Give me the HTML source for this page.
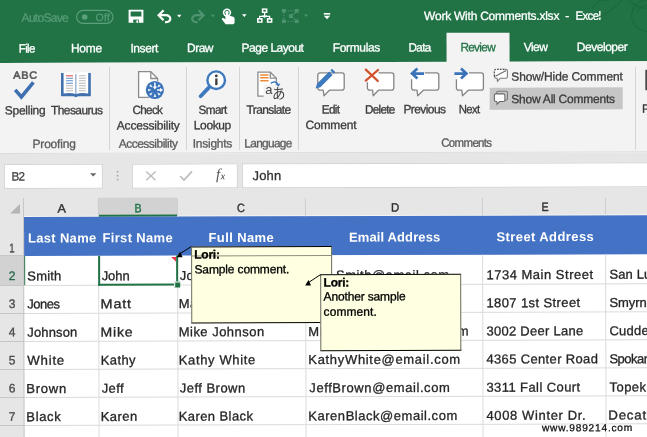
<!DOCTYPE html>
<html><head><meta charset="utf-8">
<style>
*{margin:0;padding:0;box-sizing:border-box}
html,body{width:647px;height:437px;overflow:hidden;background:#fff}
body{font-family:"Liberation Sans",sans-serif;position:relative;color:#262626}
.a{position:absolute;white-space:nowrap;line-height:1}
.b{position:absolute}
svg{position:absolute;overflow:visible}
</style></head><body>
<div id="root" style="position:absolute;left:-8px;top:-8px;width:663px;height:453px;overflow:hidden;filter:blur(0.3px)"><div style="position:absolute;left:8px;top:8px;width:647px;height:437px">
<div id="r" style="position:absolute;left:0;top:0;width:647px;height:437px;transform-origin:0 218px;transform:rotate(-0.153deg)">
<!-- title + tabs -->
<div class="b" style="left:-6px;top:-6px;width:660px;height:69.400px;background:#217346"></div>
<div class="b" style="left:447px;top:34.400px;width:63px;height:30px;background:#f3f3f3"></div>
<!-- ribbon -->
<div class="b" style="left:-6px;top:63.400px;width:660px;height:89.400px;background:#f3f3f3"></div>
<div class="b" style="left:-6px;top:152.600px;width:660px;height:1px;background:#dadada"></div>
<div class="b" style="left:490px;top:89.100px;width:132.700px;height:21.600px;background:#c6c6c6"></div>
<!-- formula bar -->
<div class="b" style="left:-6px;top:153.600px;width:660px;height:45px;background:#e6e6e6"></div>
<div class="b" style="left:3.600px;top:163.700px;width:99.600px;height:25.100px;background:#fff;border:1px solid #d4d4d4"></div>
<div class="b" style="left:132.300px;top:163.700px;width:106.200px;height:25.100px;background:#fff;border:1px solid #d4d4d4"></div>
<div class="b" style="left:241.800px;top:163.700px;width:420px;height:25.100px;background:#fff;border:1px solid #d4d4d4"></div>
<!-- column headers -->
<div class="b" style="left:-6px;top:197.500px;width:660px;height:19.700px;background:#e6e6e6"></div>
<div class="b" style="left:97.900px;top:198.200px;width:79.100px;height:19px;background:#d2d2d2;border-bottom:2px solid #217346"></div>
<div class="b" style="left:24.200px;top:216.200px;width:73.700px;height:1px;background:#f4f4f4"></div><div class="b" style="left:177px;top:216.200px;width:490px;height:1px;background:#f4f4f4"></div>
<!-- sheet white -->
<div class="b" style="left:24px;top:255px;width:640px;height:200px;background:#fff"></div>
<!-- row header col -->
<div class="b" style="left:-6px;top:217.200px;width:30.200px;height:240px;background:#e6e6e6"></div>
<div class="b" style="left:-6px;top:255.800px;width:31px;height:29.800px;background:#d2d2d2;border-right:1.600px solid #217346"></div>
<!-- blue header row -->
<div class="b" style="left:24.200px;top:217.200px;width:640px;height:39px;background:#4472c4"></div>
<!-- grid lines -->
<div class="b" style="left:24.200px;top:284.600px;width:640px;height:1px;background:#dbdbdb"></div>
<div class="b" style="left:24.200px;top:312.650px;width:640px;height:1px;background:#dbdbdb"></div>
<div class="b" style="left:24.200px;top:340.700px;width:640px;height:1px;background:#dbdbdb"></div>
<div class="b" style="left:24.200px;top:368.700px;width:640px;height:1px;background:#dbdbdb"></div>
<div class="b" style="left:24.200px;top:396.700px;width:640px;height:1px;background:#dbdbdb"></div>
<div class="b" style="left:24.200px;top:424.700px;width:640px;height:1px;background:#dbdbdb"></div>
<div class="b" style="left:97.700px;top:255.800px;width:1px;height:200px;background:#dbdbdb"></div>
<div class="b" style="left:176.600px;top:255.800px;width:1px;height:200px;background:#dbdbdb"></div>
<div class="b" style="left:304.800px;top:255.800px;width:1px;height:200px;background:#dbdbdb"></div>
<div class="b" style="left:482.300px;top:255.800px;width:1px;height:200px;background:#dbdbdb"></div>
<div class="b" style="left:605.400px;top:255.800px;width:1px;height:200px;background:#dbdbdb"></div>
<!-- header separators -->
<div class="b" style="left:97.700px;top:199px;width:1px;height:18px;background:#cfcfcf"></div>
<div class="b" style="left:176.600px;top:199px;width:1px;height:18px;background:#cfcfcf"></div>
<div class="b" style="left:304.800px;top:199px;width:1px;height:18px;background:#cfcfcf"></div>
<div class="b" style="left:482.300px;top:199px;width:1px;height:18px;background:#cfcfcf"></div>
<div class="b" style="left:605.400px;top:199px;width:1px;height:18px;background:#cfcfcf"></div>
<!-- row header lines -->
<div class="b" style="left:-6px;top:254.800px;width:30px;height:1px;background:#c6c6c6"></div>
<div class="b" style="left:-6px;top:284.600px;width:30px;height:1px;background:#c6c6c6"></div>
<div class="b" style="left:-6px;top:312.650px;width:30px;height:1px;background:#c6c6c6"></div>
<div class="b" style="left:-6px;top:340.700px;width:30px;height:1px;background:#c6c6c6"></div>
<div class="b" style="left:-6px;top:368.700px;width:30px;height:1px;background:#c6c6c6"></div>
<div class="b" style="left:-6px;top:396.700px;width:30px;height:1px;background:#c6c6c6"></div>
<div class="b" style="left:-6px;top:424.700px;width:30px;height:1px;background:#c6c6c6"></div>
<div class="b" style="left:23.400px;top:197.500px;width:1px;height:260px;background:#c6c6c6"></div>
<!-- selected cell -->
<div class="b" style="left:97.500px;top:255.800px;width:80.700px;height:30.400px;border:2px solid #217346;border-top:none"></div>
<div class="b" style="left:173.700px;top:281.500px;width:6.600px;height:6.600px;background:#217346;border:1px solid #fff;border-right:none;border-bottom:none"></div>
<span class="a" id="t0" style="left:22px;top:11px;font-size:12px;color:#569b77;letter-spacing:-0.700px;transform:translate(0.12px,0.84px);transform-origin:0 0;-webkit-text-stroke:0.3px #569b77;">AutoSave</span>
<span class="a" id="t1" style="left:96px;top:12px;font-size:10.5px;color:#569b77;letter-spacing:0.303px;transform:translate(0.03px,0.31px);transform-origin:0 0;-webkit-text-stroke:0.3px #569b77;">Off</span>
<span class="a" id="t2" style="left:424px;top:11px;font-size:12px;color:#fff;letter-spacing:-0.235px;transform:translate(0.62px,0.24px);transform-origin:0 0;-webkit-text-stroke:0.3px #fff;">Work With Comments.xlsx</span>
<span class="a" id="t3" style="left:565px;top:11px;font-size:12px;color:#fff;letter-spacing:0.000px;transform:translate(0.82px,0.24px);transform-origin:0 0;-webkit-text-stroke:0.3px #fff;">-</span>
<span class="a" id="t4" style="left:576px;top:11px;font-size:12px;color:#fff;letter-spacing:-0.700px;transform:translate(0.02px,0.24px) scaleX(0.9622);transform-origin:0 0;-webkit-text-stroke:0.3px #fff;">Excel</span>
<span class="a" id="t5" style="left:19px;top:42px;font-size:12px;color:#fff;letter-spacing:-0.700px;transform:translate(0.24px,0.54px) scaleX(0.9680);transform-origin:0 0;-webkit-text-stroke:0.3px #fff;">File</span>
<span class="a" id="t6" style="left:71px;top:42px;font-size:12px;color:#fff;letter-spacing:-0.212px;transform:translate(0.34px,0.54px);transform-origin:0 0;-webkit-text-stroke:0.3px #fff;">Home</span>
<span class="a" id="t7" style="left:130px;top:42px;font-size:12px;color:#fff;letter-spacing:-0.416px;transform:translate(0.84px,0.54px);transform-origin:0 0;-webkit-text-stroke:0.3px #fff;">Insert</span>
<span class="a" id="t8" style="left:187px;top:42px;font-size:12px;color:#fff;letter-spacing:-0.512px;transform:translate(0.44px,0.54px);transform-origin:0 0;-webkit-text-stroke:0.3px #fff;">Draw</span>
<span class="a" id="t9" style="left:242px;top:42px;font-size:12px;color:#fff;letter-spacing:-0.505px;transform:translate(0.04px,0.54px);transform-origin:0 0;-webkit-text-stroke:0.3px #fff;">Page Layout</span>
<span class="a" id="t10" style="left:333px;top:42px;font-size:12px;color:#fff;letter-spacing:-0.359px;transform:translate(0.24px,0.54px);transform-origin:0 0;-webkit-text-stroke:0.3px #fff;">Formulas</span>
<span class="a" id="t11" style="left:409px;top:42px;font-size:12px;color:#fff;letter-spacing:-0.700px;transform:translate(0.04px,0.54px) scaleX(0.9757);transform-origin:0 0;-webkit-text-stroke:0.3px #fff;">Data</span>
<span class="a" id="t12" style="left:524px;top:42px;font-size:12px;color:#fff;letter-spacing:-0.576px;transform:translate(0.24px,0.54px);transform-origin:0 0;-webkit-text-stroke:0.3px #fff;">View</span>
<span class="a" id="t13" style="left:577px;top:42px;font-size:12px;color:#fff;letter-spacing:-0.463px;transform:translate(0.24px,0.54px);transform-origin:0 0;-webkit-text-stroke:0.3px #fff;">Developer</span>
<span class="a" id="t14" style="left:460px;top:42px;font-size:12px;color:#217346;letter-spacing:-0.700px;transform:translate(0.84px,0.54px) scaleX(0.9840);transform-origin:0 0;-webkit-text-stroke:0.3px #217346;">Review</span>
<span class="a" id="t15" style="left:13px;top:69px;font-size:10.5px;color:#555;letter-spacing:0.700px;transform:translate(0.57px,0.71px) scaleX(1.0339);transform-origin:0 0;-webkit-text-stroke:0.55px #555;">ABC</span>
<span class="a" id="t16" style="left:5px;top:104px;font-size:12px;color:#3b3b3b;letter-spacing:-0.260px;transform:translate(0.08px,0.44px);transform-origin:0 0;-webkit-text-stroke:0.3px #3b3b3b;">Spelling</span>
<span class="a" id="t17" style="left:51px;top:104px;font-size:12px;color:#3b3b3b;letter-spacing:-0.587px;transform:translate(0.28px,0.44px);transform-origin:0 0;-webkit-text-stroke:0.3px #3b3b3b;">Thesaurus</span>
<span class="a" id="t18" style="left:32px;top:138px;font-size:12px;color:#5c5c5c;letter-spacing:-0.189px;transform:translate(0.69px,0.04px);transform-origin:0 0;-webkit-text-stroke:0.3px #5c5c5c;">Proofing</span>
<span class="a" id="t19" style="left:132px;top:104px;font-size:12px;color:#3b3b3b;letter-spacing:-0.700px;transform:translate(0.78px,0.44px) scaleX(0.9747);transform-origin:0 0;-webkit-text-stroke:0.3px #3b3b3b;">Check</span>
<span class="a" id="t20" style="left:117px;top:119px;font-size:12px;color:#3b3b3b;letter-spacing:-0.196px;transform:translate(0.03px,0.84px);transform-origin:0 0;-webkit-text-stroke:0.3px #3b3b3b;">Accessibility</span>
<span class="a" id="t21" style="left:118px;top:138px;font-size:12px;color:#5c5c5c;letter-spacing:-0.504px;transform:translate(0.89px,0.04px);transform-origin:0 0;-webkit-text-stroke:0.3px #5c5c5c;">Accessibility</span>
<span class="a" id="t22" style="left:198px;top:104px;font-size:12px;color:#3b3b3b;letter-spacing:-0.700px;transform:translate(0.88px,0.44px) scaleX(0.9809);transform-origin:0 0;-webkit-text-stroke:0.3px #3b3b3b;">Smart</span>
<span class="a" id="t23" style="left:194px;top:119px;font-size:12px;color:#3b3b3b;letter-spacing:-0.379px;transform:translate(0.03px,0.84px);transform-origin:0 0;-webkit-text-stroke:0.3px #3b3b3b;">Lookup</span>
<span class="a" id="t24" style="left:192px;top:138px;font-size:12px;color:#5c5c5c;letter-spacing:-0.265px;transform:translate(0.99px,0.04px);transform-origin:0 0;-webkit-text-stroke:0.3px #5c5c5c;">Insights</span>
<span class="a" id="t25" style="left:246px;top:104px;font-size:12px;color:#3b3b3b;letter-spacing:-0.600px;transform:translate(0.78px,0.44px);transform-origin:0 0;-webkit-text-stroke:0.3px #3b3b3b;">Translate</span>
<span class="a" id="t26" style="left:244px;top:138px;font-size:12px;color:#5c5c5c;letter-spacing:-0.700px;transform:translate(0.49px,0.04px) scaleX(0.9915);transform-origin:0 0;-webkit-text-stroke:0.3px #5c5c5c;">Language</span>
<span class="a" id="t27" style="left:322px;top:104px;font-size:12px;color:#3b3b3b;letter-spacing:-0.700px;transform:translate(0.08px,0.44px) scaleX(0.9821);transform-origin:0 0;-webkit-text-stroke:0.3px #3b3b3b;">Edit</span>
<span class="a" id="t28" style="left:305px;top:119px;font-size:12px;color:#3b3b3b;letter-spacing:-0.163px;transform:translate(0.73px,0.84px);transform-origin:0 0;-webkit-text-stroke:0.3px #3b3b3b;">Comment</span>
<span class="a" id="t29" style="left:365px;top:104px;font-size:12px;color:#3b3b3b;letter-spacing:-0.700px;transform:translate(0.18px,0.44px) scaleX(0.9774);transform-origin:0 0;-webkit-text-stroke:0.3px #3b3b3b;">Delete</span>
<span class="a" id="t30" style="left:403px;top:104px;font-size:12px;color:#3b3b3b;letter-spacing:-0.584px;transform:translate(0.68px,0.44px);transform-origin:0 0;-webkit-text-stroke:0.3px #3b3b3b;">Previous</span>
<span class="a" id="t31" style="left:458px;top:104px;font-size:12px;color:#3b3b3b;letter-spacing:-0.700px;transform:translate(0.98px,0.44px) scaleX(0.9467);transform-origin:0 0;-webkit-text-stroke:0.3px #3b3b3b;">Next</span>
<span class="a" id="t32" style="left:441px;top:138px;font-size:12px;color:#5c5c5c;letter-spacing:-0.700px;transform:translate(0.39px,0.04px) scaleX(0.9583);transform-origin:0 0;-webkit-text-stroke:0.3px #5c5c5c;">Comments</span>
<span class="a" id="t33" style="left:511px;top:72px;font-size:12px;color:#3b3b3b;letter-spacing:-0.115px;transform:translate(0.66px,0.04px);transform-origin:0 0;-webkit-text-stroke:0.3px #3b3b3b;">Show/Hide Comment</span>
<span class="a" id="t34" style="left:511px;top:94px;font-size:12px;color:#3b3b3b;letter-spacing:-0.227px;transform:translate(0.60px,0.54px);transform-origin:0 0;-webkit-text-stroke:0.3px #3b3b3b;">Show All Comments</span>
<span class="a" id="t35" style="left:642px;top:104px;font-size:12px;color:#3b3b3b;transform:translate(0.28px,0.44px);transform-origin:0 0;-webkit-text-stroke:0.3px #3b3b3b;">Protect</span>
<span class="a" id="t36" style="left:11px;top:170px;font-size:12px;color:#444;letter-spacing:-0.700px;transform:translate(0.60px,0.64px) scaleX(0.9718);transform-origin:0 0;-webkit-text-stroke:0.3px #444;">B2</span>
<span class="a" id="t37" style="left:252px;top:169px;font-size:13px;color:#333;letter-spacing:0.180px;transform:translate(0.60px,0.80px);transform-origin:0 0;-webkit-text-stroke:0.3px #333;">John</span>
<span class="a" id="t38" style="left:57px;top:202px;font-size:12px;color:#333;letter-spacing:0.000px;transform:translate(0.61px,0.54px) scaleX(1.0500);transform-origin:0 0;-webkit-text-stroke:0.4px #333;">A</span>
<span class="a" id="t39" style="left:134px;top:202px;font-size:12px;color:#217346;letter-spacing:0.000px;transform:translate(0.61px,0.54px) scaleX(0.8875);transform-origin:0 0;-webkit-text-stroke:0.4px #217346;">B</span>
<span class="a" id="t40" style="left:237px;top:202px;font-size:12px;color:#333;letter-spacing:0.000px;transform:translate(0.11px,0.54px) scaleX(0.9111);transform-origin:0 0;-webkit-text-stroke:0.4px #333;">C</span>
<span class="a" id="t41" style="left:391px;top:202px;font-size:12px;color:#333;letter-spacing:0.000px;transform:translate(0.01px,0.54px) scaleX(0.9556);transform-origin:0 0;-webkit-text-stroke:0.4px #333;">D</span>
<span class="a" id="t42" style="left:541px;top:202px;font-size:12px;color:#333;letter-spacing:0.000px;transform:translate(0.61px,0.54px) scaleX(0.8875);transform-origin:0 0;-webkit-text-stroke:0.4px #333;">E</span>
<span class="a" id="t43" style="left:9px;top:242px;font-size:12.4px;color:#484848;letter-spacing:0.000px;transform:translate(0.21px,0.20px) scaleX(0.7857);transform-origin:0 0;-webkit-text-stroke:0.3px #484848;">1</span>
<span class="a" id="t44" style="left:8px;top:270px;font-size:12.4px;color:#2a6a4a;letter-spacing:0.000px;transform:translate(0.53px,0.00px) scaleX(0.9714);transform-origin:0 0;-webkit-text-stroke:0.3px #2a6a4a;">2</span>
<span class="a" id="t45" style="left:8px;top:298px;font-size:12.4px;color:#484848;letter-spacing:0.000px;transform:translate(0.46px,0.10px) scaleX(0.9714);transform-origin:0 0;-webkit-text-stroke:0.3px #484848;">3</span>
<span class="a" id="t46" style="left:8px;top:326px;font-size:12.4px;color:#484848;letter-spacing:0.000px;transform:translate(0.38px,0.30px) scaleX(0.9714);transform-origin:0 0;-webkit-text-stroke:0.3px #484848;">4</span>
<span class="a" id="t47" style="left:8px;top:354px;font-size:12.4px;color:#484848;letter-spacing:0.000px;transform:translate(0.31px,0.40px) scaleX(0.9714);transform-origin:0 0;-webkit-text-stroke:0.3px #484848;">5</span>
<span class="a" id="t48" style="left:8px;top:382px;font-size:12.4px;color:#484848;letter-spacing:0.000px;transform:translate(0.23px,0.60px) scaleX(0.9714);transform-origin:0 0;-webkit-text-stroke:0.3px #484848;">6</span>
<span class="a" id="t49" style="left:8px;top:410px;font-size:12.4px;color:#484848;letter-spacing:0.000px;transform:translate(0.16px,0.70px) scaleX(0.9714);transform-origin:0 0;-webkit-text-stroke:0.3px #484848;">7</span>
<span class="a" id="t50" style="left:27px;top:231px;font-size:13px;color:#fff;font-weight:bold;letter-spacing:0.310px;transform:translate(0.93px,0.60px);transform-origin:0 0;">Last Name</span>
<span class="a" id="t51" style="left:102px;top:231px;font-size:13px;color:#fff;font-weight:bold;letter-spacing:0.338px;transform:translate(0.43px,0.60px);transform-origin:0 0;">First Name</span>
<span class="a" id="t52" style="left:208px;top:231px;font-size:13px;color:#fff;font-weight:bold;letter-spacing:0.388px;transform:translate(0.43px,0.60px);transform-origin:0 0;">Full Name</span>
<span class="a" id="t53" style="left:348px;top:231px;font-size:13px;color:#fff;font-weight:bold;letter-spacing:0.118px;transform:translate(0.93px,0.60px);transform-origin:0 0;">Email Address</span>
<span class="a" id="t54" style="left:496px;top:231px;font-size:13px;color:#fff;font-weight:bold;letter-spacing:0.404px;transform:translate(0.43px,0.60px);transform-origin:0 0;">Street Address</span>
<span class="a" id="t55" style="left:27px;top:269px;font-size:13px;color:#262626;letter-spacing:0.175px;transform:translate(0.13px,0.50px);transform-origin:0 0;-webkit-text-stroke:0.3px #262626;">Smith</span>
<span class="a" id="t56" style="left:101px;top:269px;font-size:13px;color:#262626;letter-spacing:-0.087px;transform:translate(0.53px,0.50px);transform-origin:0 0;-webkit-text-stroke:0.3px #262626;">John</span>
<span class="a" id="t57" style="left:179px;top:269px;font-size:13px;color:#262626;letter-spacing:0.278px;transform:translate(0.53px,0.50px);transform-origin:0 0;-webkit-text-stroke:0.3px #262626;">John Smith</span>
<span class="a" id="t58" style="left:309px;top:269px;font-size:13px;color:#262626;letter-spacing:-0.700px;transform:translate(0.13px,0.50px) scaleX(0.8391);transform-origin:0 0;-webkit-text-stroke:0.3px #262626;">John</span>
<span class="a" id="t59" style="left:335px;top:269px;font-size:13px;color:#262626;letter-spacing:0.533px;transform:translate(0.83px,0.50px);transform-origin:0 0;-webkit-text-stroke:0.3px #262626;">Smith@email.com</span>
<span class="a" id="t60" style="left:486px;top:269px;font-size:13px;color:#262626;letter-spacing:0.514px;transform:translate(0.23px,0.50px);transform-origin:0 0;-webkit-text-stroke:0.3px #262626;">1734 Main Street</span>
<span class="a" id="t61" style="left:609px;top:269px;font-size:13px;color:#262626;letter-spacing:0.125px;transform:translate(0.23px,0.50px);transform-origin:0 0;-webkit-text-stroke:0.3px #262626;">San Luis Obispo</span>
<span class="a" id="t62" style="left:27px;top:297px;font-size:13px;color:#262626;letter-spacing:-0.522px;transform:translate(0.06px,0.60px);transform-origin:0 0;-webkit-text-stroke:0.3px #262626;">Jones</span>
<span class="a" id="t63" style="left:100px;top:297px;font-size:13px;color:#262626;letter-spacing:0.700px;transform:translate(0.35px,0.60px) scaleX(1.1131);transform-origin:0 0;-webkit-text-stroke:0.3px #262626;">Matt</span>
<span class="a" id="t64" style="left:178px;top:297px;font-size:13px;color:#262626;letter-spacing:0.357px;transform:translate(0.46px,0.60px);transform-origin:0 0;-webkit-text-stroke:0.3px #262626;">Matt Jones</span>
<span class="a" id="t65" style="left:308px;top:297px;font-size:13px;color:#262626;letter-spacing:0.507px;transform:translate(0.06px,0.60px);transform-origin:0 0;-webkit-text-stroke:0.3px #262626;">MattJones@email.com</span>
<span class="a" id="t66" style="left:486px;top:297px;font-size:13px;color:#262626;letter-spacing:0.403px;transform:translate(0.16px,0.60px);transform-origin:0 0;-webkit-text-stroke:0.3px #262626;">1807 1st Street</span>
<span class="a" id="t67" style="left:609px;top:297px;font-size:13px;color:#262626;letter-spacing:-0.032px;transform:translate(0.16px,0.60px);transform-origin:0 0;-webkit-text-stroke:0.3px #262626;">Smyrna</span>
<span class="a" id="t68" style="left:26px;top:325px;font-size:13px;color:#262626;letter-spacing:0.130px;transform:translate(0.98px,0.80px);transform-origin:0 0;-webkit-text-stroke:0.3px #262626;">Johnson</span>
<span class="a" id="t69" style="left:100px;top:325px;font-size:13px;color:#262626;letter-spacing:0.700px;transform:translate(0.30px,0.80px) scaleX(1.0841);transform-origin:0 0;-webkit-text-stroke:0.3px #262626;">Mike</span>
<span class="a" id="t70" style="left:178px;top:325px;font-size:13px;color:#262626;letter-spacing:0.484px;transform:translate(0.38px,0.80px);transform-origin:0 0;-webkit-text-stroke:0.3px #262626;">Mike Johnson</span>
<span class="a" id="t71" style="left:307px;top:325px;font-size:13px;color:#262626;letter-spacing:0.560px;transform:translate(0.98px,0.80px);transform-origin:0 0;-webkit-text-stroke:0.3px #262626;">MikeJohnson@email.com</span>
<span class="a" id="t72" style="left:486px;top:325px;font-size:13px;color:#262626;letter-spacing:0.276px;transform:translate(0.08px,0.80px);transform-origin:0 0;-webkit-text-stroke:0.3px #262626;">3002 Deer Lane</span>
<span class="a" id="t73" style="left:609px;top:325px;font-size:13px;color:#262626;letter-spacing:0.280px;transform:translate(0.08px,0.80px);transform-origin:0 0;-webkit-text-stroke:0.3px #262626;">Cuddebackville</span>
<span class="a" id="t74" style="left:26px;top:353px;font-size:13px;color:#262626;letter-spacing:0.700px;transform:translate(0.91px,0.90px) scaleX(1.0251);transform-origin:0 0;-webkit-text-stroke:0.3px #262626;">White</span>
<span class="a" id="t75" style="left:100px;top:353px;font-size:13px;color:#262626;letter-spacing:0.389px;transform:translate(0.31px,0.90px);transform-origin:0 0;-webkit-text-stroke:0.3px #262626;">Kathy</span>
<span class="a" id="t76" style="left:178px;top:353px;font-size:13px;color:#262626;letter-spacing:0.645px;transform:translate(0.31px,0.90px);transform-origin:0 0;-webkit-text-stroke:0.3px #262626;">Kathy White</span>
<span class="a" id="t77" style="left:307px;top:353px;font-size:13px;color:#262626;letter-spacing:0.680px;transform:translate(0.91px,0.90px);transform-origin:0 0;-webkit-text-stroke:0.3px #262626;">KathyWhite@email.com</span>
<span class="a" id="t78" style="left:486px;top:353px;font-size:13px;color:#262626;letter-spacing:0.353px;transform:translate(0.01px,0.90px);transform-origin:0 0;-webkit-text-stroke:0.3px #262626;">4365 Center Road</span>
<span class="a" id="t79" style="left:609px;top:353px;font-size:13px;color:#262626;letter-spacing:-0.508px;transform:translate(0.01px,0.90px);transform-origin:0 0;-webkit-text-stroke:0.3px #262626;">Spokane</span>
<span class="a" id="t80" style="left:25px;top:382px;font-size:13px;color:#262626;letter-spacing:0.700px;transform:translate(0.82px,0.10px) scaleX(1.0073);transform-origin:0 0;-webkit-text-stroke:0.3px #262626;">Brown</span>
<span class="a" id="t81" style="left:101px;top:382px;font-size:13px;color:#262626;letter-spacing:0.398px;transform:translate(0.23px,0.10px);transform-origin:0 0;-webkit-text-stroke:0.3px #262626;">Jeff</span>
<span class="a" id="t82" style="left:179px;top:382px;font-size:13px;color:#262626;letter-spacing:0.483px;transform:translate(0.23px,0.10px);transform-origin:0 0;-webkit-text-stroke:0.3px #262626;">Jeff Brown</span>
<span class="a" id="t83" style="left:308px;top:382px;font-size:13px;color:#262626;letter-spacing:0.585px;transform:translate(0.83px,0.10px);transform-origin:0 0;-webkit-text-stroke:0.3px #262626;">JeffBrown@email.com</span>
<span class="a" id="t84" style="left:485px;top:382px;font-size:13px;color:#262626;letter-spacing:0.421px;transform:translate(0.93px,0.10px);transform-origin:0 0;-webkit-text-stroke:0.3px #262626;">3311 Fall Court</span>
<span class="a" id="t85" style="left:608px;top:382px;font-size:13px;color:#262626;letter-spacing:0.503px;transform:translate(0.93px,0.10px);transform-origin:0 0;-webkit-text-stroke:0.3px #262626;">Topeka</span>
<span class="a" id="t86" style="left:25px;top:410px;font-size:13px;color:#262626;letter-spacing:0.653px;transform:translate(0.76px,0.20px);transform-origin:0 0;-webkit-text-stroke:0.3px #262626;">Black</span>
<span class="a" id="t87" style="left:100px;top:410px;font-size:13px;color:#262626;letter-spacing:0.460px;transform:translate(0.16px,0.20px);transform-origin:0 0;-webkit-text-stroke:0.3px #262626;">Karen</span>
<span class="a" id="t88" style="left:178px;top:410px;font-size:13px;color:#262626;letter-spacing:0.421px;transform:translate(0.16px,0.20px);transform-origin:0 0;-webkit-text-stroke:0.3px #262626;">Karen Black</span>
<span class="a" id="t89" style="left:307px;top:410px;font-size:13px;color:#262626;letter-spacing:0.527px;transform:translate(0.76px,0.20px);transform-origin:0 0;-webkit-text-stroke:0.3px #262626;">KarenBlack@email.com</span>
<span class="a" id="t90" style="left:485px;top:410px;font-size:13px;color:#262626;letter-spacing:0.636px;transform:translate(0.86px,0.20px);transform-origin:0 0;-webkit-text-stroke:0.3px #262626;">4008 Winter Dr.</span>
<span class="a" id="t91" style="left:607px;top:410px;font-size:13px;color:#262626;letter-spacing:0.700px;transform:translate(0.83px,0.20px) scaleX(1.0263);transform-origin:0 0;-webkit-text-stroke:0.3px #262626;">Decatur</span>
<span class="a" id="t92" style="left:194px;top:249px;font-size:12px;color:#000;font-weight:bold;letter-spacing:-0.241px;transform:translate(0.09px,0.14px);transform-origin:0 0;-webkit-text-stroke:0.3px #000;z-index:7;">Lori:</span>
<span class="a" id="t93" style="left:194px;top:263px;font-size:12px;color:#000;letter-spacing:-0.141px;transform:translate(0.35px,0.94px);transform-origin:0 0;-webkit-text-stroke:0.3px #000;z-index:7;">Sample comment.</span>
<span class="a" id="t94" style="left:323px;top:277px;font-size:12px;color:#000;font-weight:bold;letter-spacing:-0.241px;transform:translate(0.41px,0.44px);transform-origin:0 0;-webkit-text-stroke:0.3px #000;z-index:7;">Lori:</span>
<span class="a" id="t95" style="left:323px;top:291px;font-size:12px;color:#000;letter-spacing:-0.152px;transform:translate(0.38px,0.44px);transform-origin:0 0;-webkit-text-stroke:0.3px #000;z-index:7;">Another sample</span>
<span class="a" id="t96" style="left:323px;top:306px;font-size:12px;color:#000;letter-spacing:0.079px;transform:translate(0.34px,0.64px);transform-origin:0 0;-webkit-text-stroke:0.3px #000;z-index:7;">comment.</span>
<span class="a" id="t97" style="left:541px;top:424px;font-size:10.2px;color:#0a0a0a;letter-spacing:0.767px;transform:translate(0.32px,0.77px);transform-origin:0 0;-webkit-text-stroke:0.25px #0a0a0a;z-index:8;text-shadow:0 0 1.5px #fff,0 0 1.5px #fff,0 0 2px #fff;">www.989214.com</span>
<span class="a" id="t98" style="left:216px;top:167px;font-size:15px;color:#555;transform:translate(0.10px,0.50px);transform-origin:0 0;font-family:'Liberation Serif',serif;font-style:italic;">f</span>
<span class="a" id="t99" style="left:220px;top:172px;font-size:9.5px;color:#555;transform:translate(0.90px,0.76px);transform-origin:0 0;-webkit-text-stroke:0.2px #555;font-family:'Liberation Serif',serif;font-style:italic;">x</span>
<!-- comments -->
<div class="b" style="left:190.800px;top:246.700px;width:141px;height:77px;background:#ffffe1;border:1px solid #000;border-left-color:#6a6a60;border-right-color:#6a6a60;z-index:5"><div class="b" style="left:0;top:8.400px;width:139px;height:1px;background:#8f8f7f"></div></div>
<div class="b" style="left:320px;top:274.900px;width:141px;height:77px;background:#ffffe1;border:1px solid #000;border-left-color:#6a6a60;border-right-color:#6a6a60;z-index:6"></div>
</div>
<svg width="647" height="63" viewBox="0 0 647 63" style="left:0;top:0">
<!-- bg swirls -->
<g fill="none" stroke="#1c693e" stroke-width="1.200">
<path d="M592.500 9C595 1 603 -2 609 1"/>
<path d="M598 17.500C608 14 616 7 622.500 -1"/>
<circle cx="647.500" cy="15.500" r="15.800"/>
<path d="M628.500 -1C632 5 640 8.500 648 8.500"/>
<path d="M636.500 12C639.500 7.500 644 5.500 648 5"/>
</g>
<!-- autosave toggle -->
<rect x="76.6" y="10.4" width="36.4" height="13" rx="6.5" fill="none" stroke="#5b9f7c" stroke-width="1.2"/>
<circle cx="84.7" cy="17" r="2.8" fill="#5b9f7c"/>
<!-- save -->
<g fill="#fff">
<path d="M128.6 9.8h14.8v13h-14.8z M130.6 11.6v5h10.8v-5z" fill-rule="evenodd"/>
</g>
<rect x="133.2" y="19.6" width="5.8" height="3.2" fill="#217346"/>
<rect x="136.4" y="20.3" width="1.8" height="2.5" fill="#fff"/>
<!-- undo -->
<g fill="none" stroke="#fff" stroke-width="2.2">
<path d="M159.2 15.2 H165.5 C172 15.2 172 22.6 165 22.2"/>
<path d="M163.6 10.2 L158.6 15.2 L163.6 20.2" stroke-linejoin="miter"/>
</g>
<path d="M177 14.8h4.4l-2.2 2.6z" fill="#fff"/>
<!-- redo muted -->
<g fill="none" stroke="#4f9370" stroke-width="2.2">
<path d="M203 15.2 H197 C190.5 15.2 190.5 22.6 197.5 22.2"/>
<path d="M198.6 10.2 L203.6 15.2 L198.6 20.2"/>
</g>
<path d="M210.8 14.8h4.2l-2.1 2.5z" fill="#4f9370"/>
<!-- touch -->
<g fill="#fff">
<circle cx="227" cy="12.6" r="4.2"/>
<path d="M225.4 12v7.2l-2.2-1.2c-1-.4-1.8.6-1.2 1.4l3.6 4.8h7.4c1.2 0 1.6-1 1.6-2.2v-3.4c0-1.4-1-2-2.2-2.2l-3.8-.8V12c0-2-3.200-2-3.200 0z"/>
</g>
<circle cx="227" cy="12.6" r="2.2" fill="none" stroke="#217346" stroke-width="1"/>
<rect x="226" y="11.6" width="2" height="6" rx="1" fill="#fff"/>
<path d="M242 14.2h4.6l-2.300 2.700z" fill="#fff"/>
<!-- org chart -->
<g fill="#fff">
<rect x="261.800" y="8.400" width="5.600" height="4.600"/>
<rect x="257" y="18" width="5.600" height="4.800"/>
<rect x="266.800" y="18" width="5.600" height="4.800"/>
<path d="M264 13h1.200v2.800h5v2.200h-1.200v-1h-8.800v1h-1.200v-2.200h5z"/>
<path d="M261.800 15.200h5.600l-2.800 3.400z" opacity="0.75"/>
</g>
<g fill="#217346"><rect x="263.400" y="9.800" width="2.400" height="1.800"/><rect x="258.600" y="19.600" width="2.400" height="1.800"/><rect x="268.400" y="19.600" width="2.400" height="1.800"/></g>
<!-- muted shapes icon -->
<g fill="#4f9370" stroke="#4f9370" stroke-width="1">
<rect x="282.500" y="9.500" width="2.600" height="2.600"/><rect x="295.500" y="9.500" width="2.600" height="2.600"/><rect x="282.500" y="20" width="2.600" height="2.600"/><rect x="295.500" y="20" width="2.600" height="2.600"/>
<path d="M285 10.800h10 M285 21.300h10 M283.800 12v8" fill="none" stroke-dasharray="1.500 1.200"/>
<path d="M296.500 12l-5.500 4 5.500 4.500" fill="none"/>
<rect x="289.500" y="14.800" width="2.600" height="2.600"/>
</g>
<path d="M304 14.600h4.200l-2.100 2.500z" fill="#4f9370"/>
<!-- customize QAT -->
<rect x="323.800" y="13" width="6.400" height="1.600" fill="#fff"/>
<path d="M323.800 15.800h6.400l-3.200 3.400z" fill="#fff"/>
</svg>

<svg width="647" height="100" viewBox="0 63 647 100" style="left:0;top:63px">
<!-- group separators -->
<g stroke="#d4d4d4" stroke-width="1">
<path d="M109.500 67V150M186.500 67V150M239.500 67V150M298.500 67V150M635.500 67V150"/>
</g>
<!-- highlight show all -->
<!-- spelling check -->
<path d="M15.200 89.800L21.400 97L33.400 82.400" fill="none" stroke="#3e6fb0" stroke-width="3.600"/>
<!-- thesaurus book -->
<g transform="translate(0,-0.5)">
<path d="M61 73.500h1.800l13.100 1.200l13.100-1.200h1.800v23.300h-12.600l-2.300 1l-2.300-1h-12.600z" fill="#4171ad"/>
<path d="M63.600 73.200c4-1.200 8.400-1 11.900.8v20.500c-3.500-1.200-7.900-1.400-11.900-.4z" fill="#fff"/>
<path d="M88.200 73.200c-4-1.200-8.400-1-11.900.8v20.500c3.500-1.200 7.900-1.400 11.900-.4z" fill="#fff"/>
<g stroke-width="1.100" fill="none">
<path d="M66 76.300h7" stroke="#e0584b"/>
<path d="M66 78.800h7M66 81.300h7M66 83.800h7" stroke="#5b8fd0"/>
<path d="M66 86.300h7M66 88.800h7M66 91.300h7M78.800 76.300h7M78.800 78.800h7M78.800 81.300h7M78.800 83.800h7M78.800 86.300h7M78.800 88.800h7M78.800 91.300h7" stroke="#b9b9b9"/>
</g>
</g>
<!-- check accessibility -->
<path d="M138.600 71.700h12.200l6.800 6.800v18.900h-19z" fill="#fff" stroke="#8c8c8c" stroke-width="1.300"/>
<path d="M150.800 71.700v6.800h6.800" fill="none" stroke="#8c8c8c" stroke-width="1.300"/>
<circle cx="154.9" cy="90.0" r="9.600" fill="#f3f3f3"/>
<circle cx="154.9" cy="90.0" r="9.100" fill="#3b73b9"/>
<path d="M158.82 95.83L160.73 93.92L157.16 92.26zM153.55 96.90L156.25 96.90L154.90 93.20zM149.07 93.92L150.98 95.83L152.64 92.26zM148.00 88.65L148.00 91.35L151.70 90.00zM150.98 84.17L149.07 86.08L152.64 87.74zM160.73 86.08L158.82 84.17L157.16 87.74z" fill="#e8f0fa"/>
<path d="M154.9 82.6V87.4" stroke="#fff" stroke-width="1.500" fill="none"/>
<path d="M152.70000000000002 86.6h4.400l-2.200 3z" fill="#fff"/>
<path d="M157.1 90.0H160.9" stroke="#fff" stroke-width="1.500" fill="none"/>
<path d="M160.1 87.8v4.400l3-2.200z" fill="#fff"/>
<!-- smart lookup -->
<path d="M208.800 87.600L200.600 96.200" stroke="#3e78bd" stroke-width="3.800" stroke-linecap="round"/>
<circle cx="216.200" cy="80.200" r="8.800" fill="#fff" stroke="#3e78bd" stroke-width="2.400"/>
<circle cx="216.300" cy="75.900" r="1.400" fill="#3a3a3a"/>
<rect x="215.200" y="78.500" width="2.300" height="6.600" fill="#3a3a3a"/>
<!-- translate -->
<path d="M257.900 72.200h12.400l6 6v18h-18.400z" fill="#fff" stroke="#8c8c8c" stroke-width="1.300"/>
<path d="M270.300 72.200v6h6" fill="none" stroke="#8c8c8c" stroke-width="1.300"/>
<path d="M260.200 74.900h8.400M260.200 77.800h8.400M260.200 80.700h8.400" stroke="#ed8b3a" stroke-width="1.500"/>
<rect x="263.600" y="84.600" width="24" height="15.500" fill="#f3f3f3"/>
<path d="M270.800 83.400c2.600-2.400 6.400-1.600 7.400 1.600" fill="none" stroke="#3e78bd" stroke-width="1.500"/>
<path d="M275.800 84.600l2.800 2.200l1.800-3.200z" fill="#3e78bd"/>
<text x="265.200" y="93.600" font-family="Liberation Sans, sans-serif" font-size="13" fill="#444">a</text>
<text x="272" y="98.300" font-family="Noto Sans CJK JP, sans-serif" font-size="13.500" fill="#444">あ</text>
<!-- edit comment -->
<path d="M320.0 72.8H342.0a2.2 2.2 0 0 1 2.2 2.2V88.0a2.2 2.2 0 0 1 -2.2 2.2H329.4L324.0 95.8L323.2 90.2H320.0a2.2 2.2 0 0 1 -2.2 -2.2V75.0a2.2 2.2 0 0 1 2.2 -2.2z" fill="#fff"/><path d="M320.0 72.8H342.0a2.2 2.2 0 0 1 2.2 2.2V88.0a2.2 2.2 0 0 1 -2.2 2.2H329.4L324.0 95.8L323.2 90.2H320.0a2.2 2.2 0 0 1 -2.2 -2.2V75.0a2.2 2.2 0 0 1 2.2 -2.2z" fill="none" stroke="#858585" stroke-width="1.3" stroke-linejoin="round"/>
<path d="M315.600 88.400l1.400-4.600l12.200-12.200l3.400 3.400l-12.200 12.200z M330.400 70.400l1.600-1.600l3.400 3.400l-1.600 1.600z" fill="#3e78bd"/>
<!-- delete -->
<path d="M369.6 72.8H391.6a2.2 2.2 0 0 1 2.2 2.2V88.0a2.2 2.2 0 0 1 -2.2 2.2H378.4L373.2 95.8L372.6 90.2H369.6a2.2 2.2 0 0 1 -2.2 -2.2V75.0a2.2 2.2 0 0 1 2.2 -2.2z" fill="#fff"/><path d="M378.6 72.8H391.6a2.2 2.2 0 0 1 2.2 2.2V88.0a2.2 2.2 0 0 1 -2.2 2.2H378.4L373.2 95.8L372.6 90.2H369.6a2.2 2.2 0 0 1 -2.2 -2.2V82.2" fill="none" stroke="#858585" stroke-width="1.3" stroke-linejoin="round"/>
<path d="M365.800 69.600l12 11.400M378 70l-12.200 10.600" stroke="#d3512e" stroke-width="2.300" stroke-linecap="round"/>
<!-- previous -->
<path d="M413.8 72.8H436.6a2.2 2.2 0 0 1 2.2 2.2V88.0a2.2 2.2 0 0 1 -2.2 2.2H423.4L417.7 95.8L417.0 90.2H413.8a2.2 2.2 0 0 1 -2.2 -2.2V75.0a2.2 2.2 0 0 1 2.2 -2.2z" fill="#fff"/><path d="M424.8 72.8H436.6a2.2 2.2 0 0 1 2.2 2.2V88.0a2.2 2.2 0 0 1 -2.2 2.2H423.4L417.7 95.8L417.0 90.2H413.8a2.2 2.2 0 0 1 -2.2 -2.2V79.2" fill="none" stroke="#858585" stroke-width="1.3" stroke-linejoin="round"/>
<path d="M411.400 73.600h12.600M417.400 68.600l-5.400 5l5.400 5" fill="none" stroke="#3b73b9" stroke-width="2.700"/>
<!-- next -->
<path d="M458.6 72.8H481.2a2.2 2.2 0 0 1 2.2 2.2V88.0a2.2 2.2 0 0 1 -2.2 2.2H468.2L462.5 95.8L461.8 90.2H458.6a2.2 2.2 0 0 1 -2.2 -2.2V75.0a2.2 2.2 0 0 1 2.2 -2.2z" fill="#fff"/><path d="M469.0 72.8H481.2a2.2 2.2 0 0 1 2.2 2.2V88.0a2.2 2.2 0 0 1 -2.2 2.2H468.2L462.5 95.8L461.8 90.2H458.6a2.2 2.2 0 0 1 -2.2 -2.2V79.2" fill="none" stroke="#858585" stroke-width="1.3" stroke-linejoin="round"/>
<path d="M454.400 73.600h12.600M461 68.600l5.400 5l-5.400 5" fill="none" stroke="#3b73b9" stroke-width="2.700"/>
<!-- show/hide small icon -->
<path d="M496 69.300h9.800a1.600 1.600 0 0 1 1.600 1.600v5.700a1.600 1.600 0 0 1-1.600 1.600h-5.500l-2.800 3l-.4-3h-1.100a1.600 1.600 0 0 1-1.600-1.600v-5.700a1.600 1.600 0 0 1 1.600-1.600z" fill="#fff" stroke="#7a7a7a" stroke-width="1.100"/>
<path d="M494.400 76v-5.100a1.600 1.600 0 0 1 1.600-1.600h8" fill="none" stroke="#fff" stroke-width="1.400"/>
<path d="M494.400 76v-5.100a1.600 1.600 0 0 1 1.600-1.600h8" fill="none" stroke="#444" stroke-width="1.200" stroke-dasharray="1.600 1.200"/>
<path d="M495.400 76.200l10.800-5.800" stroke="#6a6a6a" stroke-width="1.100"/>
<!-- show all small icon -->
<path d="M496.600 93.400v-0.600a1.500 1.500 0 0 1 1.500-1.500h7.900a1.500 1.500 0 0 1 1.500 1.500v5.800a1.500 1.500 0 0 1-1.500 1.500h-0.800" fill="none" stroke="#7a7a7a" stroke-width="1.100"/>
<path d="M495.900 93.900h7.500a1.500 1.500 0 0 1 1.500 1.500v4.600a1.500 1.500 0 0 1-1.500 1.500h-3.700l-2.600 2.700l-.3-2.700h-.9a1.500 1.500 0 0 1-1.500-1.500v-4.600a1.500 1.500 0 0 1 1.500-1.500z" fill="#fff" stroke="#6a6a6a" stroke-width="1.100"/>
<!-- protect (cut off at right) -->
<rect x="645.300" y="69.800" width="2" height="20.400" fill="#4a4a4a"/>
</svg>

<svg width="647" height="284" viewBox="0 153 647 284" style="left:0;top:153px;z-index:9">
<!-- namebox dropdown -->
<path d="M90 173.200h6.400l-3.200 3.400z" fill="#666"/>
<!-- dots -->
<g fill="#a6a6a6"><rect x="116.800" y="171" width="1.600" height="1.600"/><rect x="116.800" y="174.900" width="1.600" height="1.600"/><rect x="116.800" y="178.800" width="1.600" height="1.600"/></g>
<!-- cancel / enter -->
<path d="M146.200 171.400l9.400 8.800M155.600 171.400l-9.400 8.800" stroke="#bcbcbc" stroke-width="1.400" fill="none"/>
<path d="M180.200 176.200l3.800 3.800l8-8.600" stroke="#bcbcbc" stroke-width="1.700" fill="none"/>
<!-- select all triangle -->
<path d="M20 204v9.400h-9.800z" fill="#b4b4b4"/>
<!-- red comment indicator B2 -->
<path d="M171.200 257h4.800v4.800z" fill="#e8384f"/>
</svg>
<svg width="647" height="284" viewBox="0 153 647 284" style="left:0;top:153px;z-index:10">
<!-- comment arrows -->
<path d="M191.200 246.600L179.600 254" stroke="#000" stroke-width="1" fill="none"/>
<path d="M176.800 257.300h5.800l-2.600-5.600z" fill="#000"/>
<path d="M320.600 274.600L308.400 282.600" stroke="#000" stroke-width="1" fill="none"/>
<path d="M305.200 285.600h5.800l-2.600-5.600z" fill="#000"/>
</svg>


</div></div>
</body></html>
